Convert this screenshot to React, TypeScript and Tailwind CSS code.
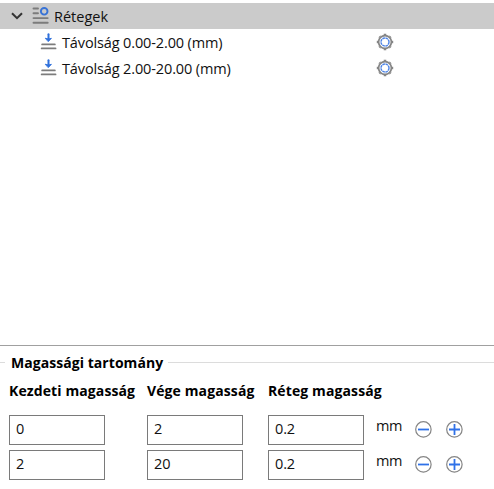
import React from "react";

function Chevron() {
  return (
    <svg width="12" height="8" viewBox="0 0 12 8" fill="none" stroke="#333" strokeWidth="2" className="shrink-0">
      <path d="M1 1.2 6 6.2 11 1.2" />
    </svg>
  );
}

function LayersIcon() {
  return (
    <svg width="18" height="18" viewBox="0 0 18 18" fill="none" strokeWidth="1.9" strokeLinecap="round" className="shrink-0">
      <path d="M2.5 1.5H7M2.5 6.2H7M2.5 11.1H16.7M2.5 15.8H16.7" stroke="#7c7c7c" />
      <circle cx="13.2" cy="4.3" r="3.3" stroke="#3873d6" />
    </svg>
  );
}

function RangeIcon() {
  return (
    <svg width="17" height="18" viewBox="0 0 17 18" fill="none" strokeLinecap="round" className="shrink-0">
      <path d="M2.2 11.4h12.6M1.7 15.4h13.8" stroke="#7c7c7c" strokeWidth="1.9" />
      <path d="M8.5 1.2v5" stroke="#2f70db" strokeWidth="2" />
      <path d="M5.6 5.3 8.5 6l2.9-.7L8.5 8.4z" fill="#2f70db" stroke="#2f70db" strokeWidth="0.9" strokeLinejoin="round" />
    </svg>
  );
}

function GearIcon() {
  return (
    <svg width="18" height="18" viewBox="-9 -9 18 18" fill="none" className="relative -top-[0.5px] left-[0.5px] shrink-0">
      <circle r="6.4" stroke="#858585" strokeWidth="1.7" />
      <path
        d="M0-8.2V-7M0 7V8.2M-8.2 0H-7M7 0H8.2M-5.6-5.6-5-5M5 5 5.6 5.6M5.6-5.6 5-5M-5 5-5.6 5.6"
        stroke="#858585"
        strokeWidth="2.6"
      />
      <circle r="4" stroke="#4b82e5" strokeWidth="1.4" strokeDasharray="2.6 0.54" />
    </svg>
  );
}

function RoundButton({ plus }: { plus?: boolean }) {
  return (
    <button className="mt-[5px] h-[18px] w-[18px] shrink-0">
      <svg width="18" height="18" viewBox="0 0 18 18" fill="none">
        <circle cx="9.4" cy="9.4" r="7.7" stroke="#858585" strokeWidth="1.2" />
        <path d={plus ? "M4 9.5h11M9.5 4v11" : "M4 9.5h11"} stroke="#2f71e8" strokeWidth="1.8" />
      </svg>
    </button>
  );
}

function TreeRow({ label }: { label: string }) {
  return (
    <div className="flex h-[26px] items-center pl-10">
      <RangeIcon />
      <span className="ml-[5px] w-[313px] whitespace-nowrap pt-px tracking-[-0.13px]">{label}</span>
      <GearIcon />
    </div>
  );
}

function Field({ value }: { value: string }) {
  return <div className="h-[30px] w-24 shrink-0 border border-[#7a7a7a] pl-1.5 leading-[26px] tracking-[-0.15px]">{value}</div>;
}

function LayerRow({ values }: { values: string[] }) {
  return (
    <div className="flex h-[30px] pl-[9px]">
      <Field value={values[0]} />
      <div className="w-[42px]" />
      <Field value={values[1]} />
      <div className="w-[25px]" />
      <Field value={values[2]} />
      <span className="ml-3 w-[38px] leading-[21px] tracking-[-0.4px]">mm</span>
      <RoundButton />
      <div className="w-[13px]" />
      <RoundButton plus />
    </div>
  );
}

export default function App() {
  return (
    <main className="h-[489px] w-[494px] overflow-hidden bg-white pt-[3px] font-['Open_Sans','Noto_Sans',sans-serif] text-[14.5px] leading-5 text-[#111]">
      <section className="h-[342px]">
        <div className="flex h-[26px] items-center bg-[#cbcbcb] pl-[11px]">
          <Chevron />
          <div className="ml-2 flex"><LayersIcon /></div>
          <span className="ml-[5px] pt-px">Rétegek</span>
        </div>
        <TreeRow label="Távolság 0.00-2.00 (mm)" />
        <TreeRow label="Távolság 2.00-20.00 (mm)" />
      </section>
      <section className="border-t border-[#a0a0a0]">
        <div className="flex h-[33px] items-center text-[14px] font-bold text-black">
          <div className="h-px w-[5px] bg-[#dcdcdc]" />
          <h2 className="ml-1.5 w-[157px] whitespace-nowrap tracking-[0.05px]">Magassági tartomány</h2>
          <div className="h-px flex-1 bg-[#dcdcdc]" />
        </div>
        <div className="flex h-[36px] whitespace-nowrap pl-[9px] pt-[2px] text-[14px] font-bold tracking-[0.11px] text-black">
          <span className="w-[138px]">Kezdeti magasság</span>
          <span className="w-[121px]">Vége magasság</span>
          <span>Réteg magasság</span>
        </div>
        <div className="flex flex-col gap-[5px]">
          <LayerRow values={["0", "2", "0.2"]} />
          <LayerRow values={["2", "20", "0.2"]} />
        </div>
      </section>
    </main>
  );
}
